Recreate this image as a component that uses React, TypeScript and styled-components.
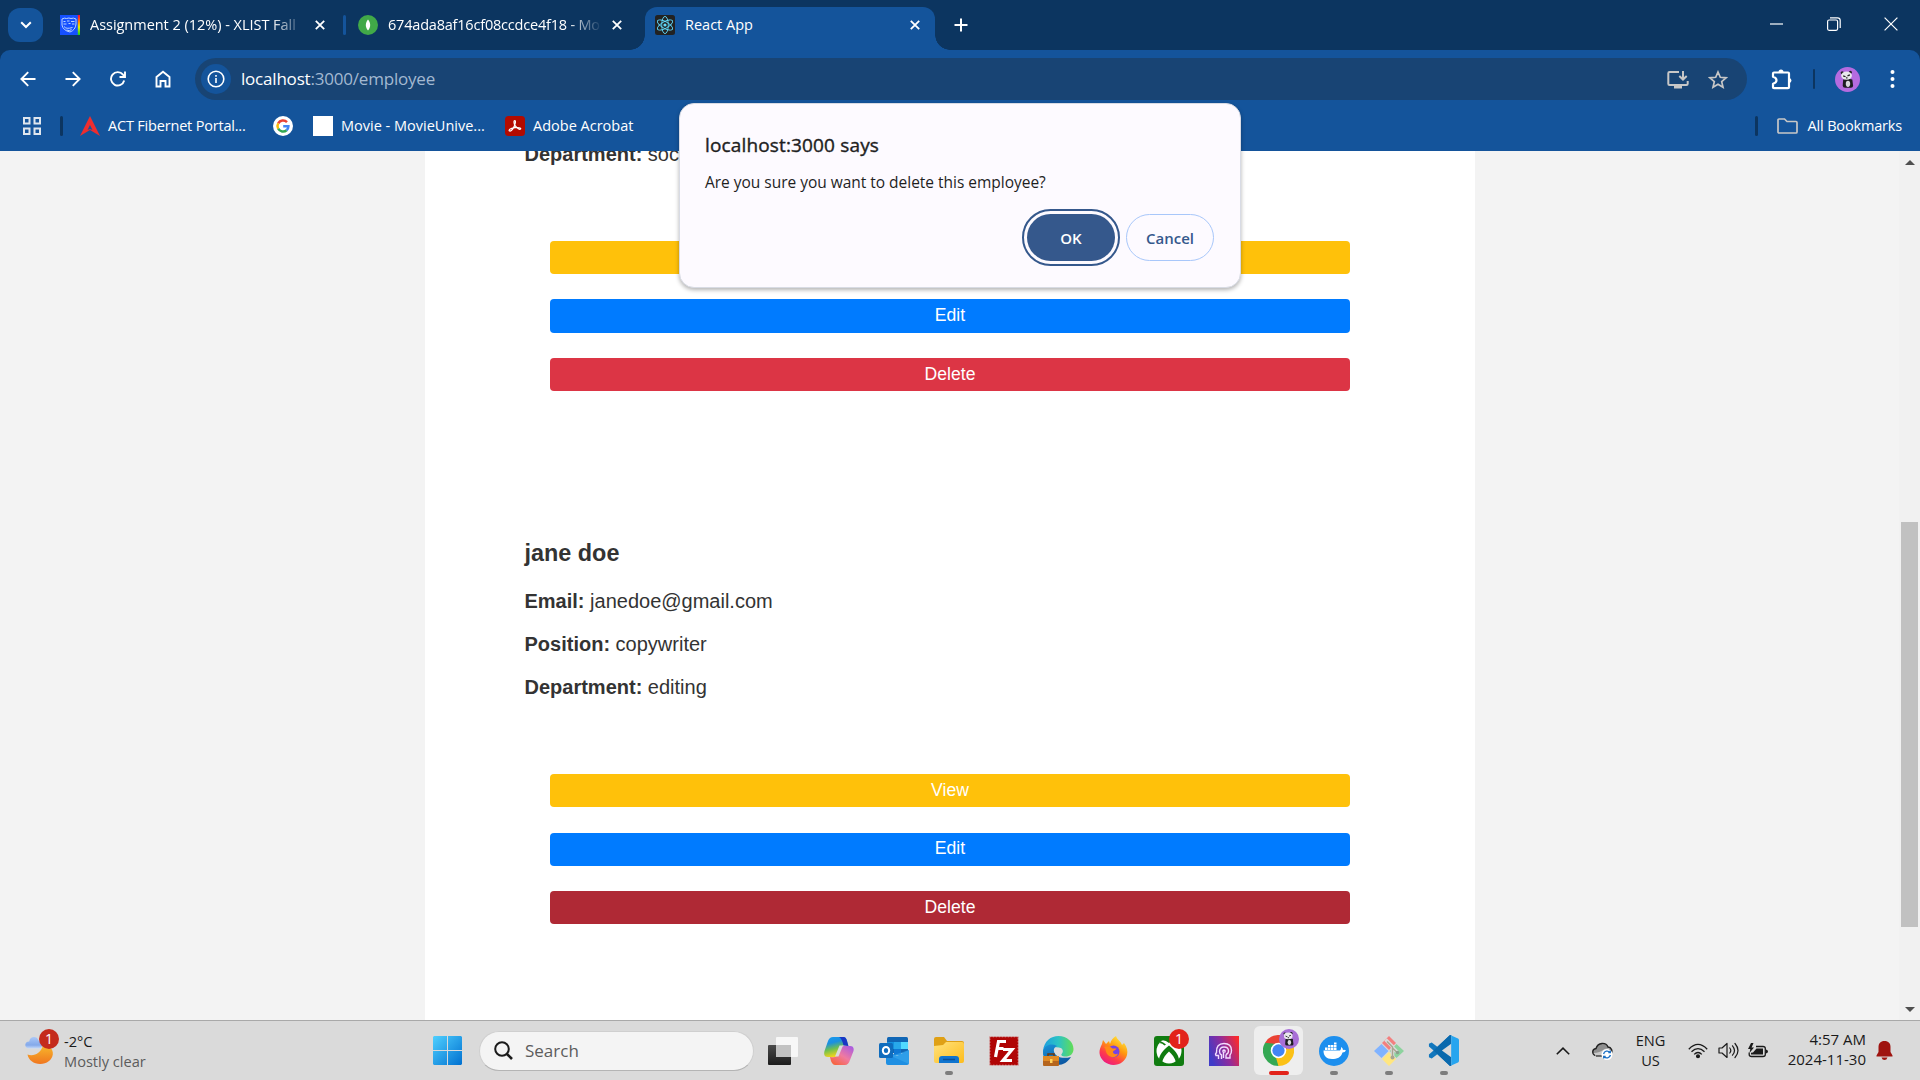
import React from "react";
import styled, { createGlobalStyle } from "styled-components";

const ui = `"Segoe UI", "Open Sans", "Noto Sans", sans-serif`;
const page = `Arial, "Liberation Sans", sans-serif`;

const GlobalStyle = createGlobalStyle`
  * { box-sizing: border-box; }
  body { margin: 0; overflow: hidden; }
  svg { display: block; flex: none; }
`;

const Screen = styled.div`
  width: 1920px;
  height: 1080px;
  display: flex;
  flex-direction: column;
  overflow: hidden;
  font-family: ${ui};
  background: #f3f3f3;
  position: relative;
`;

const Label = styled.span<{ $size?: number; $ls?: number; $color?: string; $weight?: number }>`
  font-size: ${(p) => p.$size ?? 15}px;
  letter-spacing: ${(p) => p.$ls ?? 0}px;
  color: ${(p) => p.$color ?? "#fff"};
  font-weight: ${(p) => p.$weight ?? 400};
  line-height: 20px;
  white-space: nowrap;
`;

/* ---------- tab strip ---------- */
const TabStrip = styled.div`
  height: 50px;
  flex: none;
  display: flex;
  background: #0c3560;
  color: #fff;
`;

const TabSearch = styled.button`
  width: 35px;
  height: 34px;
  margin: 8px 7px 0 8px;
  padding: 0;
  border: 0;
  border-radius: 12px;
  background: #14549b;
  color: #fff;
  display: grid;
  place-items: center;
`;

const Tab = styled.div<{ $width: number; $active?: boolean; $right?: number }>`
  width: ${(p) => p.$width}px;
  height: ${(p) => (p.$active ? 43 : 50)}px;
  margin-top: ${(p) => (p.$active ? 7 : 0)}px;
  padding: 0 ${(p) => p.$right ?? 16}px ${(p) => (p.$active ? 7 : 0)}px 10px;
  display: flex;
  align-items: center;
  gap: 10px;
  border-radius: 12px 12px 0 0;
  background: ${(p) => (p.$active ? "#14549b" : "transparent")};
  position: relative;
  &::before, &::after {
    content: "";
    display: ${(p) => (p.$active ? "block" : "none")};
    position: absolute;
    bottom: 0;
    width: 15px;
    height: 15px;
  }
  &::before { left: -15px; background: radial-gradient(circle at 0 0, transparent 14.5px, #14549b 15px); }
  &::after { right: -15px; background: radial-gradient(circle at 100% 0, transparent 14.5px, #14549b 15px); }
`;

const TabTitle = styled(Label)<{ $fade?: boolean }>`
  flex: 1;
  ${(p) => p.$fade && "mask-image: linear-gradient(to right, #000 calc(100% - 34px), transparent);"}
`;

const TabDivider = styled.i`
  width: 3px;
  height: 20px;
  margin: 15px 2px 0 0;
  border-radius: 2px;
  background: #14549b;
`;

const TabGap = styled.i`
  width: 7px;
`;

const NewTab = styled.div`
  width: 51px;
  height: 50px;
  display: grid;
  place-items: center;
`;

const WindowControls = styled.div`
  margin-left: auto;
  padding-right: 1px;
  display: flex;
  height: 48px;
`;

const WindowButton = styled.div`
  width: 57px;
  display: grid;
  place-items: center;
`;

/* ---------- toolbar ---------- */
const ToolbarBack = styled.div`
  background: #0c3560;
  flex: none;
`;

const Toolbar = styled.div`
  height: 57px;
  padding: 8px 0 7px 5px;
  display: flex;
  align-items: center;
  color: #fff;
  background: #14549b;
  border-radius: 10px 10px 0 0;
`;

const ToolButton = styled.div<{ $width?: number; $left?: number }>`
  width: ${(p) => p.$width ?? 45}px;
  height: 42px;
  padding-left: ${(p) => p.$left ?? 0}px;
  flex: none;
  display: grid;
  place-items: center;
`;

const Omnibox = styled.div`
  width: 1552px;
  height: 42px;
  flex: none;
  margin: 0 8px 0 10px;
  padding: 0 9px 0 6px;
  display: flex;
  align-items: center;
  border-radius: 21px;
  background: #184474;
`;

const SiteInfo = styled.div`
  width: 30px;
  height: 30px;
  margin-right: 10px;
  border-radius: 50%;
  background: #14549b;
  display: grid;
  place-items: center;
`;

const UrlText = styled(Label)`
  flex: 1;
  line-height: 24px;
  b { font-weight: 400; color: #fff; }
`;

const Divider = styled.i<{ $margin: string; $width?: number }>`
  width: ${(p) => p.$width ?? 3}px;
  height: 20px;
  flex: none;
  margin: ${(p) => p.$margin};
  border-radius: 2px;
  background: #0c3560;
`;

const BookmarksBar = styled.div`
  height: 44px;
  flex: none;
  padding: 0 18px 6px 23px;
  display: flex;
  align-items: center;
  background: #14549b;
`;

const Bookmark = styled.div<{ $width?: number }>`
  display: flex;
  align-items: center;
  gap: 8px;
  width: ${(p) => (p.$width ? `${p.$width}px` : "auto")};
`;

const BlankFavicon = styled.i`
  width: 20px;
  height: 20px;
  background: #fff;
`;

const AllBookmarks = styled.div`
  margin-left: auto;
  display: flex;
  align-items: center;
  gap: 10px;
`;

/* ---------- page ---------- */
const Viewport = styled.div`
  height: 869px;
  flex: none;
  display: flex;
  overflow: hidden;
  background: #f3f3f3;
`;

const Column = styled.main`
  width: 1050px;
  height: 869px;
  margin-left: 425px;
  padding: 0 99.5px;
  overflow: hidden;
  background: #fff;
  color: #333;
  font-family: ${page};
  font-size: 20px;
`;

const Card = styled.section<{ $offset?: number }>`
  margin-top: ${(p) => p.$offset ?? 0}px;
`;

const Name = styled.h3`
  margin: 0 0 23px;
  font-size: 23.4px;
  line-height: 27px;
`;

const Field = styled.p`
  margin: 0 0 20px;
  line-height: 23px;
`;

const Actions = styled.div`
  padding: 55px 25.5px 0;
  margin-bottom: 148.8px;
  display: flex;
  flex-direction: column;
  gap: 25.2px;
`;

const ActionButton = styled.button<{ $bg: string }>`
  height: 33.3px;
  padding: 0 0 2px;
  border: 0;
  border-radius: 4px;
  background: ${(p) => p.$bg};
  color: #fff;
  font-family: ${page};
  font-size: 17.6px;
  line-height: 20px;
`;

const ScrollTrack = styled.div`
  width: 21px;
  margin-left: auto;
  padding: 9px 2px 8px;
  background: #f1f1f1;
  display: flex;
  flex-direction: column;
  align-items: center;
`;

const Arrow = styled.i<{ $down?: boolean }>`
  border: 5px solid transparent;
  ${(p) => (p.$down ? "border-top-color: #505050; border-bottom: 0; margin-top: auto;" : "border-bottom-color: #505050; border-top: 0;")}
`;

const Thumb = styled.i`
  width: 17px;
  height: 405px;
  margin-top: 357px;
  background: #c1c1c1;
`;

/* ---------- dialog ---------- */
const Dialog = styled.div`
  position: absolute;
  left: 679px;
  top: 103px;
  width: 562px;
  height: 185px;
  padding: 29px 26px 26px 25px;
  border: 1px solid #d8dbe4;
  border-radius: 15px;
  background: #fdfaff;
  box-shadow: 0 2px 4px rgba(0, 0, 0, 0.3);
  display: flex;
  flex-direction: column;
`;

const DialogTitle = styled(Label)`
  line-height: 24px;
  margin-bottom: 15px;
  -webkit-text-stroke: 0.4px #1f1f1f;
`;

const DialogActions = styled.div`
  margin-top: auto;
  display: flex;
  justify-content: flex-end;
  gap: 11px;
`;

const DialogButton = styled.button<{ $primary?: boolean }>`
  width: 88px;
  height: 47px;
  padding: 0;
  border-radius: 24px;
  font-family: ${ui};
  font-size: 15px;
  font-weight: 600;
  border: ${(p) => (p.$primary ? "0" : "1px solid #a8c7fa")};
  color: ${(p) => (p.$primary ? "#fff" : "#35588c")};
  background: ${(p) => (p.$primary ? "#35588c" : "#fdfaff")};
  ${(p) => p.$primary && "outline: 2px solid #35588c; outline-offset: 3px;"}
`;

/* ---------- taskbar ---------- */
const Taskbar = styled.footer`
  height: 60px;
  flex: none;
  display: flex;
  align-items: center;
  background: #dadada;
  border-top: 1px solid #a9a9a9;
`;

const Weather = styled.div`
  width: 433px;
  padding-left: 25px;
  display: flex;
  gap: 9px;
`;

const WeatherIcon = styled.div`
  position: relative;
  width: 30px;
  height: 38px;
  padding-top: 4px;
`;

const Badge = styled.span<{ $left: number; $top: number; $bg?: string }>`
  position: absolute;
  left: ${(p) => p.$left}px;
  top: ${(p) => p.$top}px;
  width: 20px;
  height: 20px;
  border-radius: 50%;
  background: ${(p) => p.$bg ?? "#c42b1c"};
  color: #fff;
  font-size: 14px;
  line-height: 19px;
  text-align: center;
`;

const Lines = styled.div<{ $align?: string; $width?: number; $lift?: number }>`
  display: flex;
  flex-direction: column;
  align-items: ${(p) => p.$align ?? "flex-start"};
  width: ${(p) => (p.$width ? `${p.$width}px` : "auto")};
  padding-bottom: ${(p) => p.$lift ?? 0}px;
`;

const SearchBox = styled.div`
  width: 275px;
  height: 40px;
  margin: 0 1px 0 17px;
  padding-left: 14px;
  display: flex;
  align-items: center;
  gap: 12px;
  border-radius: 20px;
  background: #f4f4f4;
  border: 1px solid #cfcfcf;
  border-bottom-color: #b4b4b4;
`;

const TaskButton = styled.div<{ $active?: boolean }>`
  width: 49px;
  height: 49px;
  margin: 0 3px;
  flex: none;
  border-radius: 6px;
  display: grid;
  place-items: center;
  position: relative;
  background: ${(p) => (p.$active ? "#eeeeee" : "transparent")};
`;

const PinnedApps = styled.div`
  display: flex;
  margin-left: 1px;
`;

const Indicator = styled.i<{ $active?: boolean }>`
  position: absolute;
  bottom: 0;
  left: 50%;
  transform: translateX(-50%);
  width: ${(p) => (p.$active ? 20 : 8)}px;
  height: 4px;
  border-radius: 2px;
  background: ${(p) => (p.$active ? "#e2231a" : "#7d7d7d")};
`;

const AvatarBadge = styled.div`
  position: absolute;
  left: 25px;
  top: 3px;
`;

const Tray = styled.div`
  margin-left: auto;
  padding-right: 27px;
  display: flex;
  align-items: center;
`;

const TrayItem = styled.div<{ $width: number }>`
  width: ${(p) => p.$width}px;
  display: grid;
  place-items: center;
`;

const Bell = styled.div`
  margin-left: 10px;
`;

/* ---------- drawings ---------- */
const Close = () => (
  <svg width="10" height="10" viewBox="0 0 10 10" stroke="#fff" strokeWidth="1.8"><path d="M.8.8l8.4 8.4M9.2.8L.8 9.2" /></svg>
);

const CourseIcon = () => (
  <svg width="20" height="20" viewBox="0 0 20 20">
    <defs><linearGradient id="rainbow" x2="0" y2="1"><stop stopColor="#f03" /><stop offset=".35" stopColor="#ff8a00" /><stop offset=".6" stopColor="#e8f000" /><stop offset="1" stopColor="#10d020" /></linearGradient></defs>
    <rect width="20" height="20" fill="#1550ff" />
    <rect x="17.800" width="2.200" height="20" fill="url(#rainbow)" />
    <g fill="none" stroke="#b9d2ff" strokeWidth="1">
      <path d="M2 4q2.500-1.500 4.500-.5 2.500-1 4.500 0 2.500-1 5 .5v5q-.5 6-6 8Q3 15.500 2 10z" />
      <path d="M3.500 6.500h2M7 6h2.500M11 6.500h3.500M3.500 9h3M8.500 8.500h2M12 9h2.500M4 11.500q2 3 8.500 1M6.500 15q3 1.500 5-.5" />
    </g>
  </svg>
);

const MongoIcon = () => (
  <svg width="20" height="20" viewBox="0 0 20 20"><circle cx="10" cy="10" r="10" fill="#41a948" /><path d="M10 4.500c2.800 3.500 3 7.500 0 11-3-3.500-2.800-7.500 0-11z" fill="#fff" /></svg>
);

const ReactIcon = () => (
  <svg width="20" height="20" viewBox="0 0 20 20">
    <rect width="20" height="20" rx="2.500" fill="#222" />
    <g fill="none" stroke="#61dafb" strokeWidth=".9">
      {[0, 60, 120].map((a) => <ellipse key={a} cx="10" cy="10" rx="8.600" ry="3.300" transform={`rotate(${a + 30} 10 10)`} />)}
    </g>
    <circle cx="10" cy="10" r="1.600" fill="#61dafb" />
  </svg>
);

const Panda = ({ size, bg = "#b56be0" }: { size: number; bg?: string }) => (
  <svg width={size} height={size} viewBox="0 0 26 26">
    <circle cx="13" cy="13" r="13" fill={bg} />
    <circle cx="7.500" cy="6" r="1.600" fill="#222" /><circle cx="16" cy="5.500" r="1.600" fill="#222" />
    <path d="M8.500 13q5-1.500 9.500 0l.8 6.500q0 2-2.300 2h-6q-2.300 0-2.500-2z" fill="#1d1d22" />
    <ellipse cx="12" cy="9" rx="5.600" ry="4.300" fill="#e9e9ec" />
    <path d="M8.500 9.200l2.500 1M15.500 8.200l-2.500 1M11.500 11.300h1.500" stroke="#222" strokeWidth="1.200" />
    <ellipse cx="13.500" cy="17.500" rx="2.300" ry="3.200" fill="#d9d9de" />
  </svg>
);

const GoogleIcon = () => (
  <svg width="20" height="20" viewBox="0 0 20 20" fill="none" strokeWidth="2.500">
    <circle cx="10" cy="10" r="10" fill="#fff" />
    <path d="M14 6.200A5.500 5.500 0 0 0 5.200 7.300" stroke="#ea4335" />
    <path d="M5.200 7.300a5.500 5.500 0 0 0 0 5.400" stroke="#fbbc05" />
    <path d="M5.200 12.700a5.500 5.500 0 0 0 8.400 1.500" stroke="#34a853" />
    <path d="M13.600 14.200A5.300 5.300 0 0 0 15.400 10.200H10.200" stroke="#4285f4" />
  </svg>
);

const AdobeIcon = () => (
  <svg width="20" height="20" viewBox="0 0 20 20"><rect width="20" height="20" rx="3.500" fill="#b30b00" />
    <path d="M4.300 14.800c-.8-1 1.500-2.500 5.700-3.100 3.500-.5 6 .2 5.700 1.200-.5 1.300-4-.8-5.600-3.200C8.700 7.500 8.600 4.500 9.800 4.600c1.300.1.500 3.900-1.200 7-1.400 2.500-3.200 4.200-4.300 3.200z" fill="none" stroke="#fff" strokeWidth="1.200" /></svg>
);

const WeatherArt = () => (
  <svg width="29" height="30" viewBox="0 0 29 30">
    <defs>
      <linearGradient id="moon" x2="0" y2="1"><stop stopColor="#f7b92b" /><stop offset="1" stopColor="#f0761f" /></linearGradient>
      <linearGradient id="cloud" x2="0" y2="1"><stop stopColor="#a9c7f7" /><stop offset=".7" stopColor="#84a9ea" /><stop offset="1" stopColor="#c6daf9" /></linearGradient>
    </defs>
    <path d="M2.500 19.500c6 2.500 14-1.500 15.500-9.500 6 0 10.500 4 9.800 9.500-.8 5.500-6 9.500-12.600 9.500S3.500 25 2.500 19.500z" fill="url(#moon)" />
    <path d="M4 13.500c-5 0-5-7 .2-7C5 1 12 .5 13.500 5.500c5 .5 5 8 0 8z" fill="url(#cloud)" />
  </svg>
);

const WindowsLogo = () => (
  <svg width="29" height="29" viewBox="0 0 29 29">
    <defs><linearGradient id="win" x2="1" y2="1"><stop stopColor="#4fd0ff" /><stop offset="1" stopColor="#0070d0" /></linearGradient></defs>
    <path d="M1 0h13v14H0V1zM15 0h13l1 1v13H15zM0 15h14v14H1l-1-1zM15 15h14v13l-1 1H15z" fill="url(#win)" />
  </svg>
);

const TaskView = () => (
  <svg width="30" height="28" viewBox="0 0 30 28">
    <defs><linearGradient id="tv" y2="1" x2="0"><stop stopColor="#4a4a4a" /><stop offset="1" stopColor="#1c1c1c" /></linearGradient></defs>
    <rect x="0" y="8" width="23" height="20" rx="1" fill="url(#tv)" /><rect x="8" y="0" width="22" height="20" rx="1" fill="#f7f7f7" /><rect x="8" y="8" width="15" height="12" fill="#c2c2c2" />
  </svg>
);

const Copilot = () => (
  <svg width="30" height="28" viewBox="0 0 30 28">
    <defs>
      <linearGradient id="cp1" x2=".3" y2="1"><stop stopColor="#1a9df0" /><stop offset=".35" stopColor="#1b8fe0" /><stop offset=".65" stopColor="#6fc04f" /><stop offset="1" stopColor="#f3d51b" /></linearGradient>
      <linearGradient id="cp2" x1="1" x2=".2" y2="1"><stop stopColor="#a158e8" /><stop offset=".55" stopColor="#f07aa0" /><stop offset="1" stopColor="#f7643c" /></linearGradient>
    </defs>
    <path d="M9 0h11q3 0 4 9-4-2-6 0l-4 11H4q-5 0-3.500-6L4 4q1.500-4 5-4z" fill="url(#cp1)" />
    <path d="M15 0h4.500q2.500 0 3.500 4l1.500 5-5-.500q-1.500-7-4.500-8.500z" fill="#1937c4" />
    <path d="M20 9h6q4.500 0 3.500 5l-3.500 9q-1.500 5-5 5H11q-3.500 0-5-8 5 1 7-1l3.500-8q1-2 3.500-2z" fill="url(#cp2)" />
    <path d="M15.500 8.500h3.500L14.500 19.500h-3.500z" fill="#dadada" />
  </svg>
);

const Outlook = () => (
  <svg width="30" height="29" viewBox="0 0 30 29">
    <rect x="8" y="1" width="21" height="16" rx="1.500" fill="#1066b5" />
    <path d="M8 6h7v7H8z" fill="#1490df" /><path d="M15 6h7v7h-7z" fill="#28a8ea" /><path d="M22 6h7v7h-7z" fill="#50d9ff" /><path d="M15 13h7v6h-7z" fill="#0f78d4" />
    <path d="M7 14l11 6 12-6v13q0 2-2 2H9q-2 0-2-2z" fill="#1f8fe2" /><path d="M30 14v14L12 20z" fill="#38a9ee" opacity=".6" />
    <rect x="0" y="7" width="14" height="15" rx="1.500" fill="#0f6cbd" /><ellipse cx="7" cy="14.500" rx="3.200" ry="3.500" fill="none" stroke="#fff" strokeWidth="2" />
  </svg>
);

const Folder = () => (
  <svg width="30" height="27" viewBox="0 0 30 27">
    <defs><linearGradient id="fold" x2="1" y2="1"><stop stopColor="#ffe27d" /><stop offset="1" stopColor="#fdbc1c" /></linearGradient></defs>
    <path d="M0 2q0-2 2-2h8l3 4h15q2 0 2 2v6H0z" fill="#dfa015" /><path d="M0 9l9-1 3-3h16q2 0 2 2v17q0 2-2 2H2q-2 0-2-2z" fill="url(#fold)" />
    <path d="M5 26v-4q0-3 3-3h14q3 0 3 3v4z" fill="#0f74cf" /><path d="M9 22.500h12" stroke="#0a4f96" strokeWidth="1.500" />
  </svg>
);

const FileZilla = () => (
  <svg width="30" height="30" viewBox="0 0 30 30">
    <rect x=".7" y=".7" width="28.600" height="28.600" fill="#b00505" stroke="#d8b0b0" strokeWidth="1.200" strokeDasharray="1.500 1.500" />
    <path d="M17 5.500h-7.500L6.500 21M8 12.500h6.500M14 13.500h9l-9 11h9" fill="none" stroke="#fff" strokeWidth="3.200" />
  </svg>
);

const Edge = () => (
  <svg width="31" height="30" viewBox="0 0 31 30">
    <defs>
      <linearGradient id="eg1"><stop stopColor="#1c9de0" /><stop offset=".5" stopColor="#2cc3c4" /><stop offset="1" stopColor="#62dd54" /></linearGradient>
      <linearGradient id="eg2" x2=".5" y2="1"><stop stopColor="#1a93d9" /><stop offset="1" stopColor="#0c59a4" /></linearGradient>
    </defs>
    <path d="M0 15C1 5 8 0 15.500 0 24 0 30.500 6 30.500 13c0 5-3.500 7.500-8 7.500-4 0-5-1.500-3.500-3 2-2.500.5-6-4-6C8 10 3 14 0 20z" fill="url(#eg1)" />
    <path d="M0 15c2-6 8-8 14-5-3 1-4 4-2.500 7S18 23.500 28 21c-3 5-8 8-13 8C6 30-.5 23 0 15z" fill="url(#eg2)" />
    <ellipse cx="15.500" cy="15" rx="3.600" ry="3.300" fill="#dadada" />
    <rect y="20" width="16" height="10" rx="1" fill="#b5651d" /><rect y="20" width="16" height="5" rx="1" fill="#e08a24" /><path d="M5 20v-2h6v2" stroke="#6b3a10" fill="none" strokeWidth="1.500" /><rect x="7" y="23" width="2.500" height="4" fill="#ffd35c" />
  </svg>
);

const Firefox = () => (
  <svg width="29" height="29" viewBox="0 0 29 29">
    <defs><linearGradient id="ff" x1=".8" x2=".2" y2="1"><stop stopColor="#fff044" /><stop offset=".4" stopColor="#ff980e" /><stop offset=".7" stopColor="#ff3c4b" /><stop offset="1" stopColor="#e8158c" /></linearGradient></defs>
    <path d="M3 8l1-4 3 4 3-3 1 3c1-4 3-6 6-8 1 4 5 5 6 9l2-2c3 4 4 8 3 12-1.500 6-7 10-13.500 10S1 24 .5 17c-.2-3 1-6 2.500-9z" fill="url(#ff)" />
    <circle cx="14.500" cy="15.500" r="6" fill="#7542e5" /><path d="M5 11c4-1 7 0 8.500 1.500h4c-1 2-3.500 2-3.500 3.500 0 2 3 3 5 1.500-1 4-7 5-10 1.500-3-3-1.500-6-4-8z" fill="#ff8a16" />
  </svg>
);

const Xbox = () => (
  <svg width="30" height="30" viewBox="0 0 30 30">
    <rect width="30" height="30" rx="3" fill="#107c10" /><circle cx="15" cy="15" r="12.500" fill="#fff" />
    <path d="M7 4.500q4-1 8 2.500 4-3.500 8-2.500-3.500-3.500-8-3.500T7 4.500zM15 9.500C9 14 5.500 19 5 23.500l3 3C9 22 12 18 15 15.500c3 2.500 6 6.500 7 11l3-3C24.500 19 21 14 15 9.500zM12 8.500Q9 6 7 5.500L5.500 7q3 0 5 2.500z" fill="#107c10" />
  </svg>
);

const HeadApp = () => (
  <svg width="30" height="30" viewBox="0 0 30 30">
    <defs><linearGradient id="hd" y1=".6" x2="1" y2=".2"><stop stopColor="#3f3bc8" /><stop offset=".5" stopColor="#8f2c9c" /><stop offset="1" stopColor="#fb2a2c" /></linearGradient></defs>
    <rect width="30" height="30" fill="url(#hd)" />
    <g fill="none" stroke="#f3dcff" strokeWidth="1.400">
      <path d="M9.500 23v-3.500H7l-.5-1.500 1-1.500Q7 7.500 15 7.500q7.500 0 7.500 7 0 3-1.500 4.500V22h-4v-3.500" />
      <path d="M12.500 23v-4q-2-1-2-3.500 0-4.500 4.500-4.500t4.500 4q0 2.500-2.500 3.500M14.500 22v-5.500q-1.500-2 .5-2.500 2 .5.500 2.500" />
    </g>
  </svg>
);

const Chrome = () => (
  <svg width="31" height="31" viewBox="0 0 48 48">
    <path d="M24 24L3.200 12A24 24 0 0 1 44.800 12z" fill="#ea4335" /><path d="M24 24L44.800 12A24 24 0 0 1 24 48z" fill="#fbc116" /><path d="M24 24V48A24 24 0 0 1 3.200 12z" fill="#34a853" />
    <path d="M24 12h20.800L34 24z" fill="#ea4335" /><path d="M34.500 30L24 48l-4-13z" fill="#fbc116" /><path d="M13.600 30L3.200 12 20 14z" fill="#34a853" />
    <circle cx="24" cy="24" r="12" fill="#fff" /><circle cx="24" cy="24" r="9.500" fill="#4285f4" />
  </svg>
);

const Docker = () => (
  <svg width="30" height="30" viewBox="0 0 30 30">
    <circle cx="15" cy="15" r="15" fill="#1d8fee" />
    <path d="M4.500 14.500h16.500q1.500-1 1-3.500 2 1 2 3 1.500-.500 3 .500-1 2-3.500 2C22 21.500 18 23 13 23c-5.500 0-8.500-3-8.500-8.500z" fill="#fff" />
    <path d="M6 11.500h2.500V14H6zM9 11.500h2.500V14H9zM12 11.500h2.500V14H12zM15 11.500h2.500V14H15zM9 9h2.500v2H9zM12 9h2.500v2H12zM15 9h2.500v2H15zM15 6.500h2.500v2H15z" fill="#fff" />
  </svg>
);

const Git = () => (
  <svg width="30" height="30" viewBox="0 0 30 30">
    <path d="M15 0l7 7-7 7-7-7z" fill="#f37f7f" /><path d="M7.500 8l7 7-7 7-7.500-7z" fill="#80b3ff" /><path d="M15 16l7 7-7 7-7-7z" fill="#ffe680" /><path d="M22.500 8l7.500 7-7.500 7-7-7z" fill="#8dd39e" />
    <path d="M11.500 3.500l7 7v11M18.500 11.500l5 5" stroke="#dadada" strokeWidth="3.600" fill="none" /><path d="M13 5.500l5.500 5.500V21M18.500 12l4.500 4.500" stroke="#a9a58f" strokeWidth="1.400" fill="none" /><circle cx="18.500" cy="21.500" r="2" fill="#a9a58f" /><circle cx="23.500" cy="16.500" r="1.800" fill="#8a9f8c" />
  </svg>
);

const VsCode = () => (
  <svg width="31" height="31" viewBox="0 0 100 100">
    <path d="M71 0L30 38 12 24 3 28v9l15 13L3 63v9l9 4 18-14 41 38 4-30V30z" fill="#1277bd" />
    <path d="M75 28L45 50l30 22v28h-4L18 50 71 0h4z" fill="#0a69ad" />
    <path d="M75 28L45 50l30 22z" fill="#dadada" />
    <path d="M71 0l26 11q3 2 3 5v68q0 3-3 5l-26 11q4-1 4-6V6q0-5-4-6z" fill="#27a5ef" />
  </svg>
);

const OneDrive = () => (
  <svg width="22" height="18" viewBox="0 0 22 18">
    <path d="M3.500 13.500C-.5 12 0 7 4 6.500 6 0 14 0 16 5c3.500.5 4.500 3.500 3.500 6" fill="#8f8f8f" stroke="#222" strokeWidth="1.400" />
    <path d="M1.500 11q6 0 11-4l5-1-4 8H4z" fill="#c9c9c9" /><path d="M4 14h6" stroke="#222" strokeWidth="1.200" />
    <circle cx="15" cy="12.500" r="5.500" fill="#fff" /><path d="M11.600 12a3.600 3.600 0 0 1 6.300-1.600M18.400 13a3.600 3.600 0 0 1-6.300 1.600M18.300 8.500v2.200h-2M11.700 16.500v-2.200h2" fill="none" stroke="#1a6fc4" strokeWidth="1.300" />
  </svg>
);

const Wifi = () => (
  <svg width="20" height="16" viewBox="0 0 20 16" fill="none" stroke="#1a1a1a" strokeWidth="1.300">
    <path d="M.8 6.200q9.200-9.500 18.400 0M3.500 8.800q6.500-6.500 13 0M6.200 11.400q3.800-3.800 7.600 0" /><circle cx="10" cy="13.300" r="1.400" fill="#1a1a1a" />
  </svg>
);

const Speaker = () => (
  <svg width="21" height="17" viewBox="0 0 21 17" fill="none" stroke="#1a1a1a" strokeWidth="1.200" strokeLinecap="round" strokeLinejoin="round">
    <path d="M1 6h3l5-4.500v14L4 11H1zM11.800 6q2 2.500 0 5M14.500 3.800q4 4.700 0 9.400M17 1.500q6 7 0 14" />
  </svg>
);

const Battery = () => (
  <svg width="20" height="16" viewBox="0 0 20 16">
    <path d="M8 3.500h7q2.300 0 2.300 2v6q0 2-2.300 2H3.500q-2.300 0-2.300-2V9.500" fill="none" stroke="#1a1a1a" strokeWidth="1.300" /><path d="M8.500 5.500h6.500v6H3V9.800l2-.3z" fill="#1a1a1a" /><path d="M18 6.500q2 .5 2 2t-2 2z" fill="#1a1a1a" /><path d="M3 0L0 6h2.300L1.500 10 6 4.500H3.600L5.500 0z" fill="#1a1a1a" />
  </svg>
);

const apps = [
  { icon: <Copilot /> },
  { icon: <Outlook /> },
  { icon: <Folder />, running: true },
  { icon: <FileZilla /> },
  { icon: <Edge /> },
  { icon: <Firefox /> },
  { icon: <Xbox />, badge: "1" },
  { icon: <HeadApp /> },
  { icon: <Chrome />, running: true, active: true },
  { icon: <Docker />, running: true },
  { icon: <Git />, running: true },
  { icon: <VsCode />, running: true },
];

const ActionList = ({ pressed }: { pressed?: boolean }) => (
  <Actions>
    <ActionButton $bg="#ffc10a">View</ActionButton>
    <ActionButton $bg="#007bff">Edit</ActionButton>
    <ActionButton $bg={pressed ? "#af2935" : "#dc3545"}>Delete</ActionButton>
  </Actions>
);

export default function App() {
  return (
    <Screen>
      <GlobalStyle />
      <TabStrip>
        <TabSearch><svg width="12" height="8" viewBox="0 0 12 8" fill="none" stroke="#fff" strokeWidth="2"><path d="M1.200 1.200L6 6l4.800-4.800" /></svg></TabSearch>
        <Tab $width={293} $right={18}><CourseIcon /><TabTitle $fade $size={14.5} $ls={-0.03}>Assignment 2 (12%) - XLIST Fall</TabTitle><Close /></Tab>
        <TabDivider />
        <Tab $width={290} $right={16}><MongoIcon /><TabTitle $fade $size={14.5} $ls={-0.2}>674ada8af16cf08ccdce4f18 - Mo</TabTitle><Close /></Tab>
        <TabGap />
        <Tab $width={290} $right={15} $active><ReactIcon /><TabTitle $size={14.5}>React App</TabTitle><Close /></Tab>
        <NewTab><svg width="14" height="14" viewBox="0 0 14 14" stroke="#fff" strokeWidth="2"><path d="M7 .5v13M.5 7h13" /></svg></NewTab>
        <WindowControls>
          <WindowButton><svg width="13" height="2"><path d="M0 1h13" stroke="#fff" strokeWidth="1.200" /></svg></WindowButton>
          <WindowButton><svg width="14" height="14" viewBox="0 0 14 14" fill="none" stroke="#fff" strokeWidth="1.200"><rect x=".6" y="3" width="10" height="10.300" rx="1.500" /><path d="M3 .8h7.500q2.700 0 2.700 2.700V11" /></svg></WindowButton>
          <WindowButton><svg width="14" height="14" viewBox="0 0 14 14" stroke="#fff" strokeWidth="1.200"><path d="M.6.600l12.800 12.800M13.400.600L.6 13.400" /></svg></WindowButton>
        </WindowControls>
      </TabStrip>

      <ToolbarBack>
        <Toolbar>
          <ToolButton><svg width="16" height="16" viewBox="0 0 16 16" fill="none" stroke="#fff" strokeWidth="1.900"><path d="M15.500 8H2M8.200 1.200L1.400 8l6.800 6.800" /></svg></ToolButton>
          <ToolButton><svg width="16" height="16" viewBox="0 0 16 16" fill="none" stroke="#fff" strokeWidth="1.900"><path d="M.5 8H14M7.800 1.200L14.600 8l-6.800 6.800" /></svg></ToolButton>
          <ToolButton><svg width="16" height="16" viewBox="0 0 16 16" fill="none" stroke="#fff" strokeWidth="1.900"><path d="M14.200 9.500A6.700 6.700 0 1 1 13 3.700L15 6M15 .500V6H9.500" /></svg></ToolButton>
          <ToolButton><svg width="16" height="18" viewBox="0 0 16 18" fill="none" stroke="#fff" strokeWidth="1.900"><path d="M1.500 7L8 1.700 14.500 7v9.500h-4V11h-5v5.500h-4z" /></svg></ToolButton>
          <Omnibox>
            <SiteInfo><svg width="18" height="18" viewBox="0 0 18 18" fill="none" stroke="#fff" strokeWidth="1.600"><circle cx="9" cy="9" r="7.800" /><path d="M9 8v5M9 5v1.800" /></svg></SiteInfo>
            <UrlText $size={17} $ls={-0.2} $color="#a3b9d1"><b>localhost</b>:3000/employee</UrlText>
            <ToolButton $width={40}><svg width="22" height="19" viewBox="0 0 22 19" fill="none" stroke="#c7c7c7" strokeWidth="2"><path d="M12 2H2.500Q1.300 2 1.300 3.200v10.500q0 1.300 1.200 1.300h17q1.200 0 1.200-1.300V11M16 1v8M12.300 6l3.700 3.500L19.700 6" /><path d="M7 17h8" strokeWidth="3" /></svg></ToolButton>
            <ToolButton $width={40}><svg width="20" height="19" viewBox="0 0 20 19" fill="none" stroke="#c7c7c7" strokeWidth="1.700"><path d="M10 2l2.300 5.300 5.800.5-4.400 3.800 1.300 5.600-5-3-5 3 1.300-5.600L1.900 7.800l5.800-.5z" /></svg></ToolButton>
          </Omnibox>
          <ToolButton $width={51} $left={2}><svg width="22" height="21" viewBox="0 0 22 21"><path d="M3 3.500h14q1 0 1 1v13.700q0 1-1 1H3q-1 0-1-1v-3.500q3.500-1 3.500-3.500T2 7.800V4.500q0-1 1-1z" fill="none" stroke="#fff" strokeWidth="2.200" strokeLinejoin="round" /><path d="M7.500 3a2.500 2.500 0 0 1 5 0zM18 9a2.500 2.500 0 0 1 0 5z" fill="#fff" /></svg></ToolButton>
          <Divider $margin="0 20px 0 7px" $width={2} />
          <Panda size={25} />
          <ToolButton $width={60} $left={5}><svg width="5" height="18" viewBox="0 0 5 18" fill="#fff"><circle cx="2.500" cy="2" r="2" /><circle cx="2.500" cy="9" r="2" /><circle cx="2.500" cy="16" r="2" /></svg></ToolButton>
        </Toolbar>
      </ToolbarBack>

      <BookmarksBar>
        <svg width="18" height="18" viewBox="0 0 18 18" fill="none" stroke="#dfe6ee" strokeWidth="2"><path d="M1 1h5.500v5.500H1zM11.500 1H17v5.500h-5.500zM1 11.500h5.500V17H1zM11.500 11.500H17V17h-5.500z" /></svg>
        <Divider $margin="0 17px 0 19px" />
        <Bookmark $width={193}><svg width="20" height="20" viewBox="0 0 20 20"><path d="M10 0l10 20-10-6-10 6z" fill="#ee2d2f" /><path d="M10 9l2.500 5L10 13l-2.500 1z" fill="#14549b" /></svg><Label $size={14.5} $ls={-0.19}>ACT Fibernet Portal...</Label></Bookmark>
        <Bookmark $width={40}><GoogleIcon /></Bookmark>
        <Bookmark $width={192}><BlankFavicon /><Label $size={14.5}>Movie - MovieUnive...</Label></Bookmark>
        <Bookmark><AdobeIcon /><Label $size={14.5}>Adobe Acrobat</Label></Bookmark>
        <AllBookmarks>
          <Divider $margin="0 9px 0 0" />
          <svg width="21" height="16" viewBox="0 0 21 16" fill="none" stroke="#c7c7c7" strokeWidth="1.700"><path d="M1 2q0-1 1-1h5.500L10 3.500h9q1 0 1 1V14q0 1-1 1H2q-1 0-1-1z" /></svg>
          <Label $size={14.5} $ls={-0.17}>All Bookmarks</Label>
        </AllBookmarks>
      </BookmarksBar>

      <Viewport>
        <Column>
          <Card $offset={-8}>
            <Field><b>Department:</b> social</Field>
            <ActionList />
          </Card>
          <Card>
            <Name>jane doe</Name>
            <Field><b>Email:</b> janedoe@gmail.com</Field>
            <Field><b>Position:</b> copywriter</Field>
            <Field><b>Department:</b> editing</Field>
            <ActionList pressed />
          </Card>
        </Column>
        <ScrollTrack><Arrow /><Thumb /><Arrow $down /></ScrollTrack>
      </Viewport>

      <Taskbar>
        <Weather>
          <WeatherIcon><WeatherArt /><Badge $left={14} $top={-2}>1</Badge></WeatherIcon>
          <Lines><Label $size={14.6} $color="#1a1a1a">-2°C</Label><Label $size={14.6} $color="#5c5c5c">Mostly clear</Label></Lines>
        </Weather>
        <WindowsLogo />
        <SearchBox>
          <svg width="19" height="19" viewBox="0 0 19 19" fill="none" stroke="#1a1a1a" strokeWidth="2"><circle cx="8" cy="8" r="6.800" /><path d="M13 13l5 5" strokeWidth="2.600" /></svg>
          <Label $size={17} $color="#5c5c5c">Search</Label>
        </SearchBox>
        <TaskButton><TaskView /></TaskButton>
        <PinnedApps>
          {apps.map((a, i) => (
            <TaskButton key={i} $active={a.active}>
              {a.icon}
              {a.badge && <Badge $left={25} $top={3} $bg="#e2231a">{a.badge}</Badge>}
              {a.active && <AvatarBadge><Panda size={20} bg="#a86fd6" /></AvatarBadge>}
              {a.running && <Indicator $active={a.active} />}
            </TaskButton>
          ))}
        </PinnedApps>
        <Tray>
          <TrayItem $width={41}><svg width="14" height="8" viewBox="0 0 14 8" fill="none" stroke="#1a1a1a" strokeWidth="1.600"><path d="M.8 7.200L7 1.200l6.200 6" /></svg></TrayItem>
          <TrayItem $width={40}><OneDrive /></TrayItem>
          <Lines $align="center" $width={55} $lift={2}><Label $color="#1a1a1a" $size={14.6}>ENG</Label><Label $color="#1a1a1a" $size={14.6}>US</Label></Lines>
          <TrayItem $width={40}><Wifi /></TrayItem>
          <TrayItem $width={20}><Speaker /></TrayItem>
          <TrayItem $width={40}><Battery /></TrayItem>
          <Lines $align="flex-end" $width={88} $lift={4}><Label $color="#1a1a1a">4:57 AM</Label><Label $color="#1a1a1a">2024-11-30</Label></Lines>
          <Bell><svg width="17" height="19" viewBox="0 0 17 19" fill="#9f1410"><path d="M8.500 0c4 0 6 2.500 6 6v5l2 3.500v1H.5v-1l2-3.500V6c0-3.500 2-6 6-6zM5.500 16.500h6q-.8 2.500-3 2.500t-3-2.500z" /></svg></Bell>
        </Tray>
      </Taskbar>

      <Dialog role="alertdialog">
        <DialogTitle $size={19} $ls={0.15} $color="#1f1f1f">localhost:3000 says</DialogTitle>
        <Label $size={15.5} $ls={-0.02} $color="#1f1f1f">Are you sure you want to delete this employee?</Label>
        <DialogActions><DialogButton $primary>OK</DialogButton><DialogButton>Cancel</DialogButton></DialogActions>
      </Dialog>
    </Screen>
  );
}
